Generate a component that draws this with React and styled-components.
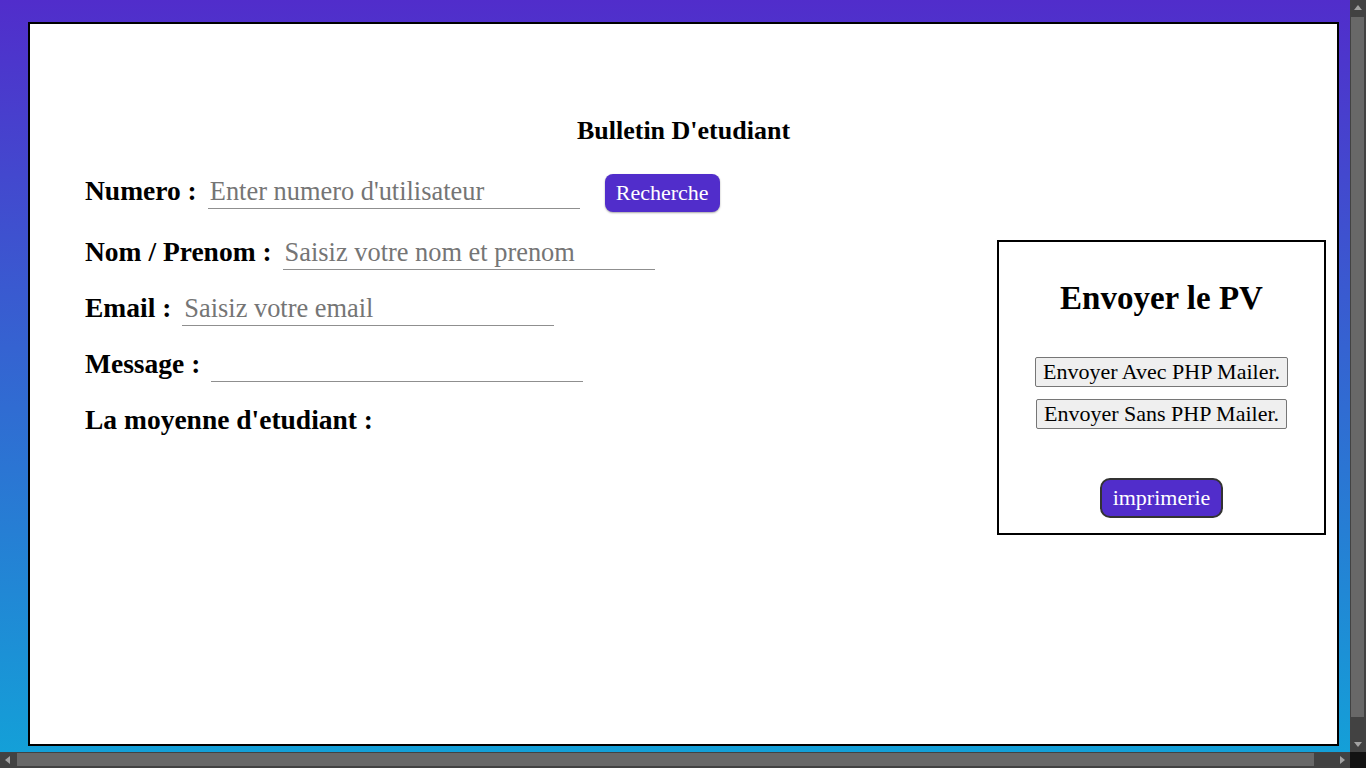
import React from "react";
import styled, { createGlobalStyle } from "styled-components";

const GlobalStyle = createGlobalStyle`
  body {
    margin: 0;
    color: #000;
    font-family: "Liberation Serif", "Times New Roman", serif;
    overflow: hidden;
  }
  * {
    box-sizing: border-box;
  }
`;

const Arrow = ({ dir }) => {
  const points = {
    up: "4,10 8,5 12,10",
    down: "4,6 8,11 12,6",
    left: "10,4 5,8 10,12",
    right: "6,4 11,8 6,12",
  };
  return (
    <svg width="16" height="16" viewBox="0 0 16 16">
      <polygon points={points[dir]} fill="#a3a3a3" />
    </svg>
  );
};

const App = () => {
  return (
    <Frame>
      <GlobalStyle />
      <Viewport>
        <Page>
          <Card>
            <Title>Bulletin D'etudiant</Title>
            <Body>
              <Form>
                <Row first>
                  <Label>Numero :</Label>
                  <Input type="text" placeholder="Enter numero d'utilisateur" />
                  <PurpleButton small>Recherche</PurpleButton>
                </Row>
                <Row>
                  <Label>Nom / Prenom :</Label>
                  <Input type="text" placeholder="Saisiz votre nom et prenom" />
                </Row>
                <Row>
                  <Label>Email :</Label>
                  <Input type="email" placeholder="Saisiz votre email" />
                </Row>
                <Row>
                  <Label>Message :</Label>
                  <Input type="text" />
                </Row>
                <Row>
                  <Label>La moyenne d'etudiant :</Label>
                </Row>
              </Form>
              <Panel>
                <PanelTitle>Envoyer le PV</PanelTitle>
                <GreyButton>Envoyer Avec PHP Mailer.</GreyButton>
                <GreyButton>Envoyer Sans PHP Mailer.</GreyButton>
                <PurpleButton>imprimerie</PurpleButton>
              </Panel>
            </Body>
          </Card>
        </Page>
      </Viewport>
      <ScrollBar vertical>
        <Arrow dir="up" />
        <Track vertical>
          <Thumb vertical />
        </Track>
        <Arrow dir="down" />
      </ScrollBar>
      <ScrollBar>
        <Arrow dir="left" />
        <Track>
          <Thumb />
        </Track>
        <Arrow dir="right" />
      </ScrollBar>
      <Corner />
    </Frame>
  );
};

export default App;

const Frame = styled.div`
  width: 1366px;
  height: 768px;
  display: grid;
  grid-template-columns: 1350px 16px;
  grid-template-rows: 752px 16px;
  overflow: hidden;
`;

const Viewport = styled.div`
  overflow: hidden;
`;

const ScrollBar = styled.div`
  display: flex;
  flex-direction: ${(p) => (p.vertical ? "column" : "row")};
  background: #424242;
`;

const Track = styled.div`
  flex: 1;
  display: flex;
  flex-direction: ${(p) => (p.vertical ? "column" : "row")};
  padding: ${(p) => (p.vertical ? "1px 2px 19px 1px" : "1px 20px 2px 1px")};
`;

const Thumb = styled.div`
  flex: 1;
  background: #686868;
`;

const Corner = styled.div`
  background: #121212;
`;

const Page = styled.div`
  width: 1371px;
  height: 774px;
  padding: 22px 32px 28px 28px;
  background: linear-gradient(to bottom, #512dcb 0%, #3563d1 45%, #12a3d8 100%);
`;

const Card = styled.div`
  height: 100%;
  border: 2px solid #000;
  background: #fff;
  padding-top: 92px;
  display: flex;
  flex-direction: column;
`;

const Title = styled.h3`
  margin: 0;
  text-align: center;
  font-size: 26px;
  font-weight: bold;
`;

const Body = styled.div`
  display: flex;
  justify-content: space-between;
  align-items: flex-start;
  padding: 28px 11px 0 55px;
`;

const Form = styled.form`
  display: flex;
  flex-direction: column;
  gap: 22px;
`;

const Row = styled.div`
  display: flex;
  align-items: baseline;
  margin-bottom: ${(p) => (p.first ? "2px" : "0")};
`;

const Label = styled.label`
  font-size: 27.5px;
  font-weight: bold;
  margin-right: 11px;
`;

const Input = styled.input`
  width: 372px;
  font-family: "Liberation Serif", "Times New Roman", serif;
  font-size: 26.4px;
  padding: 1px 2px;
  border: none;
  border-bottom: 1px solid #8f8f8f;
  background: transparent;
  outline: none;
  color: #000;

  &::placeholder {
    color: #757575;
  }
`;

const PurpleButton = styled.button`
  font-family: "Liberation Serif", "Times New Roman", serif;
  font-size: 22px;
  color: #fff;
  background: #512dcb;
  border: ${(p) => (p.small ? "none" : "2px solid #333")};
  border-radius: ${(p) => (p.small ? "8px" : "10px")};
  padding: ${(p) => (p.small ? "6px 11px" : "5px 11px")};
  margin-left: ${(p) => (p.small ? "25px" : "0")};
  margin-top: ${(p) => (p.small ? "0" : "37px")};
  box-shadow: ${(p) => (p.small ? "0 1px 2px rgba(0,0,0,0.35)" : "none")};
  cursor: pointer;
`;

const Panel = styled.div`
  margin-top: 66px;
  width: 329px;
  height: 295px;
  border: 2px solid #000;
  display: flex;
  flex-direction: column;
  align-items: center;
`;

const PanelTitle = styled.h1`
  font-size: 33px;
  margin: 38px 0 40px;
`;

const GreyButton = styled.button`
  font-family: "Liberation Serif", "Times New Roman", serif;
  font-size: 22px;
  padding: 1px 7px;
  margin-bottom: 12px;
  color: #000;
  background: #efefef;
  border: 1px solid #767676;
  border-radius: 2px;
`;
